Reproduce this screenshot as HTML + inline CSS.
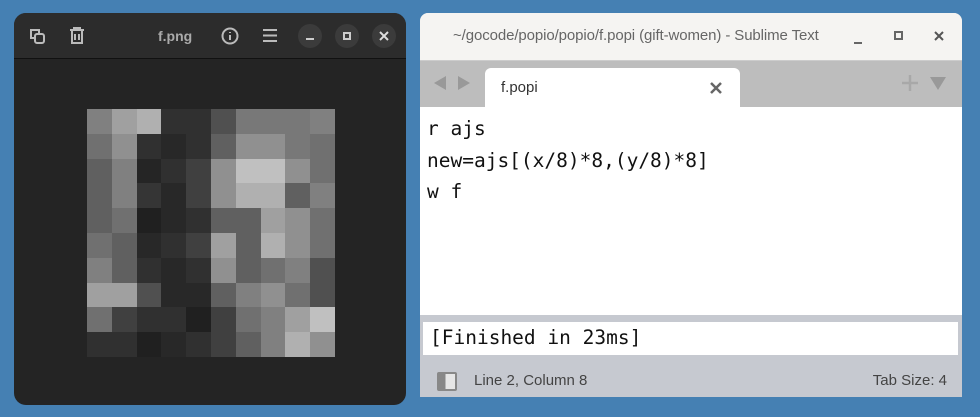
<!DOCTYPE html>
<html><head><meta charset="utf-8"><style>
*{margin:0;padding:0;box-sizing:border-box}
body{width:980px;height:417px;background:#4580b3;position:relative;overflow:hidden;font-family:"Liberation Sans","DejaVu Sans",sans-serif}
.lw{position:absolute;left:14px;top:13px;width:392px;height:392px;border-radius:12px;background:#242424;overflow:hidden}
.lh{position:absolute;left:0;top:0;width:100%;height:46px;background:#2c2c2c;border-bottom:1px solid #111}
.rb{position:absolute;top:11px;width:24px;height:24px;border-radius:12px;background:#3b3b3b}
.grid{position:absolute;left:73px;top:96px;width:248px;height:248px;display:grid;grid-template-columns:repeat(10,1fr);grid-template-rows:repeat(10,1fr)}
.rw{position:absolute;left:420px;top:13px;width:542px;height:384px;border-radius:8px 8px 0 0;overflow:hidden;background:#c6c9d0}
.mono{font-family:"DejaVu Sans Mono","Liberation Mono",monospace;font-size:19.5px;color:#111}
</style></head><body>
<div class="lw">
 <div class="lh">
  <svg style="position:absolute;left:14px;top:14px" width="18" height="18" viewBox="0 0 18 18" fill="none" stroke="#bbb" stroke-width="2"><path d="M6 11H3V3h8v3"/><rect x="7" y="7" width="9" height="9" rx="2"/></svg>
  <svg style="position:absolute;left:54px;top:13px" width="18" height="20" viewBox="0 0 18 20" fill="none" stroke="#bbb" stroke-width="2"><path d="M2 4h14M6 4V2h6v2M4 4v13h10V4M7 8v6M11 8v6"/></svg>
  <div style="position:absolute;left:144px;top:15px;color:#aaa;font-size:14px;font-weight:bold">f.png</div>
  <svg style="position:absolute;left:207px;top:14px" width="18" height="18" viewBox="0 0 18 18" fill="none" stroke="#bbb" stroke-width="2"><circle cx="9" cy="9" r="7.5"/><path d="M9 8v5M9 5v1"/></svg>
  <svg style="position:absolute;left:248px;top:15px" width="16" height="15" viewBox="0 0 16 15" stroke="#bbb" stroke-width="2"><path d="M1 2h14M1 7.5h14M1 13h14"/></svg>
  <div class="rb" style="left:284px"><div style="position:absolute;left:8px;top:14px;width:8px;height:2px;background:#ccc"></div></div>
  <div class="rb" style="left:321px"><div style="position:absolute;left:8px;top:8px;width:8px;height:8px;border:2px solid #ccc"></div></div>
  <div class="rb" style="left:358px"><svg style="position:absolute;left:7px;top:7px" width="10" height="10" stroke="#ddd" stroke-width="2"><path d="M1 1l8 8M9 1l-8 8"/></svg></div>
 </div>
 <div class="grid">
<i style="background:#808080"></i><i style="background:#a0a0a0"></i><i style="background:#b0b0b0"></i><i style="background:#303030"></i><i style="background:#303030"></i><i style="background:#505050"></i><i style="background:#787878"></i><i style="background:#787878"></i><i style="background:#787878"></i><i style="background:#808080"></i>
<i style="background:#707070"></i><i style="background:#909090"></i><i style="background:#303030"></i><i style="background:#282828"></i><i style="background:#303030"></i><i style="background:#606060"></i><i style="background:#909090"></i><i style="background:#909090"></i><i style="background:#787878"></i><i style="background:#707070"></i>
<i style="background:#606060"></i><i style="background:#808080"></i><i style="background:#252525"></i><i style="background:#303030"></i><i style="background:#404040"></i><i style="background:#909090"></i><i style="background:#c0c0c0"></i><i style="background:#c0c0c0"></i><i style="background:#909090"></i><i style="background:#707070"></i>
<i style="background:#606060"></i><i style="background:#808080"></i><i style="background:#353535"></i><i style="background:#282828"></i><i style="background:#404040"></i><i style="background:#909090"></i><i style="background:#b0b0b0"></i><i style="background:#b0b0b0"></i><i style="background:#606060"></i><i style="background:#808080"></i>
<i style="background:#606060"></i><i style="background:#707070"></i><i style="background:#202020"></i><i style="background:#282828"></i><i style="background:#303030"></i><i style="background:#606060"></i><i style="background:#606060"></i><i style="background:#a0a0a0"></i><i style="background:#909090"></i><i style="background:#707070"></i>
<i style="background:#707070"></i><i style="background:#606060"></i><i style="background:#282828"></i><i style="background:#303030"></i><i style="background:#404040"></i><i style="background:#a0a0a0"></i><i style="background:#606060"></i><i style="background:#b0b0b0"></i><i style="background:#909090"></i><i style="background:#707070"></i>
<i style="background:#808080"></i><i style="background:#606060"></i><i style="background:#303030"></i><i style="background:#282828"></i><i style="background:#303030"></i><i style="background:#909090"></i><i style="background:#606060"></i><i style="background:#707070"></i><i style="background:#808080"></i><i style="background:#505050"></i>
<i style="background:#a0a0a0"></i><i style="background:#a0a0a0"></i><i style="background:#505050"></i><i style="background:#282828"></i><i style="background:#282828"></i><i style="background:#606060"></i><i style="background:#808080"></i><i style="background:#909090"></i><i style="background:#707070"></i><i style="background:#505050"></i>
<i style="background:#707070"></i><i style="background:#404040"></i><i style="background:#303030"></i><i style="background:#303030"></i><i style="background:#202020"></i><i style="background:#404040"></i><i style="background:#707070"></i><i style="background:#808080"></i><i style="background:#a0a0a0"></i><i style="background:#c0c0c0"></i>
<i style="background:#303030"></i><i style="background:#303030"></i><i style="background:#202020"></i><i style="background:#282828"></i><i style="background:#303030"></i><i style="background:#404040"></i><i style="background:#606060"></i><i style="background:#808080"></i><i style="background:#b0b0b0"></i><i style="background:#909090"></i>
 </div>
</div>
<div class="rw">
 <div style="position:absolute;left:0;top:0;width:542px;height:48px;background:#f5f4f2;border-bottom:1px solid #ccc">
  <div style="position:absolute;left:33px;top:14px;font-size:15px;color:#666;letter-spacing:-0.1px">~/gocode/popio/popio/f.popi (gift-women) - Sublime Text</div>
  <div style="position:absolute;left:434px;top:29px;width:8px;height:2px;background:#666"></div>
  <div style="position:absolute;left:474px;top:18px;width:9px;height:9px;border:2px solid #666"></div>
  <svg style="position:absolute;left:514px;top:18px" width="10" height="10" stroke="#555" stroke-width="2"><path d="M1 1l8 8M9 1l-8 8"/></svg>
 </div>
 <div style="position:absolute;left:0;top:48px;width:542px;height:46px;background:#bdbdbd">
  <svg style="position:absolute;left:14px;top:14px" width="36" height="16"><path d="M0 8l12-7v14z" fill="#999"/><path d="M36 8l-12-7v14z" fill="#999"/></svg>
  <div style="position:absolute;left:65px;top:7px;width:255px;height:40px;background:#fff;border-radius:6px 6px 0 0">
   <div style="position:absolute;left:16px;top:11px;font-size:15px;color:#333">f.popi</div>
   <svg style="position:absolute;left:225px;top:14px" width="12" height="12" stroke="#666" stroke-width="2.5"><path d="M1 1l10 10M11 1l-10 10"/></svg>
  </div>
  <svg style="position:absolute;left:482px;top:14px" width="16" height="16" stroke="#a8a8a8" stroke-width="2.5"><path d="M8 0v16M0 8h16"/></svg>
  <svg style="position:absolute;left:510px;top:16px" width="16" height="13"><path d="M0 0h16l-8 13z" fill="#999"/></svg>
 </div>
 <div style="position:absolute;left:0;top:94px;width:542px;height:208px;background:#fff"></div>
 <div class="mono" style="position:absolute;left:7px;top:100px;line-height:31.5px;white-space:pre">r ajs
new=ajs[(x/8)*8,(y/8)*8]
w f</div>
 <div style="position:absolute;left:3px;top:309px;width:535px;height:33px;background:#fff"></div>
 <div class="mono" style="position:absolute;left:10px;top:312px;line-height:26px">[Finished in 23ms]</div>
 <div style="position:absolute;left:17px;top:359px;width:20px;height:19px;border:2px solid #888;border-radius:2px;background:linear-gradient(90deg,#888 40%,#e6e6e6 40%)"></div>
 <div style="position:absolute;left:54px;top:359px;font-size:15px;color:#444">Line 2, Column 8</div>
 <div style="position:absolute;right:15px;top:359px;font-size:15px;color:#444">Tab Size: 4</div>
</div>
</body></html>
